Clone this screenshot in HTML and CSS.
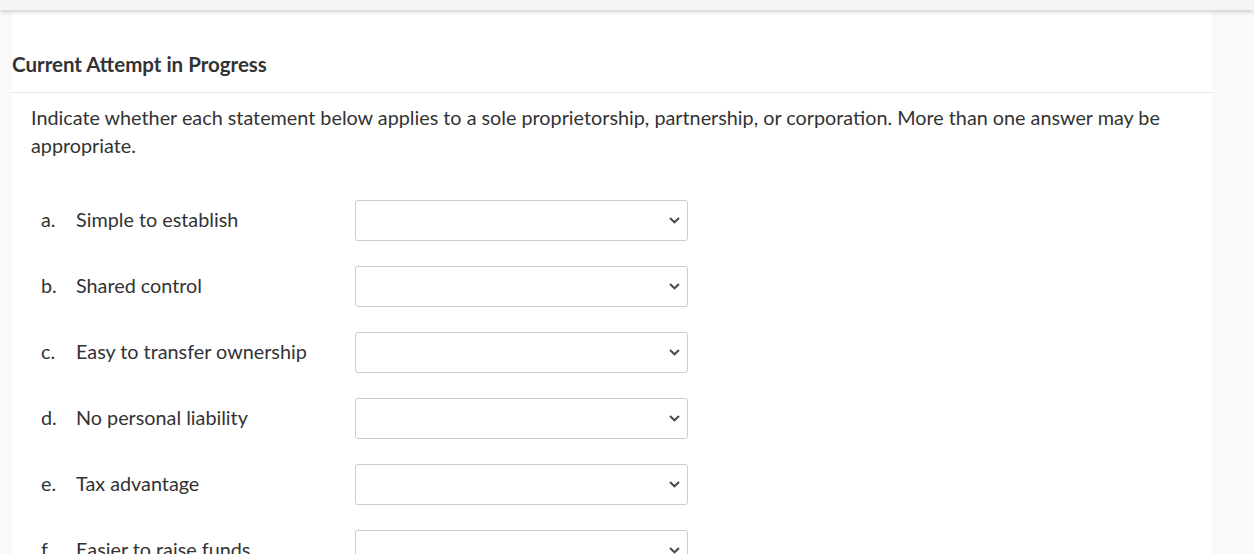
FILE: index.html
```html
<!DOCTYPE html>
<html>
<head>
<meta charset="utf-8">
<link rel="stylesheet" href="styles.css">
</head>
<body>
<div class="topbar"></div>
<div class="page">
  <main class="card">
    <h2 class="title">Current Attempt in Progress</h2>
    <div class="body">
      <p class="intro">Indicate whether each statement below applies to a sole proprietorship, partnership, or corporation. More than one answer may be appropriate.</p>
      <div class="items">
        <div class="item"><span class="letter">a.</span><span class="text">Simple to establish</span><div class="select"><svg viewBox="0 0 11 7" class="chev"><path d="M1 1l4.5 4.3 4.5-4.3" fill="none" stroke="#4a4a4a" stroke-width="2"/></svg></div></div>
        <div class="item"><span class="letter">b.</span><span class="text">Shared control</span><div class="select"><svg viewBox="0 0 11 7" class="chev"><path d="M1 1l4.5 4.3 4.5-4.3" fill="none" stroke="#4a4a4a" stroke-width="2"/></svg></div></div>
        <div class="item"><span class="letter">c.</span><span class="text">Easy to transfer ownership</span><div class="select"><svg viewBox="0 0 11 7" class="chev"><path d="M1 1l4.5 4.3 4.5-4.3" fill="none" stroke="#4a4a4a" stroke-width="2"/></svg></div></div>
        <div class="item"><span class="letter">d.</span><span class="text">No personal liability</span><div class="select"><svg viewBox="0 0 11 7" class="chev"><path d="M1 1l4.5 4.3 4.5-4.3" fill="none" stroke="#4a4a4a" stroke-width="2"/></svg></div></div>
        <div class="item"><span class="letter">e.</span><span class="text">Tax advantage</span><div class="select"><svg viewBox="0 0 11 7" class="chev"><path d="M1 1l4.5 4.3 4.5-4.3" fill="none" stroke="#4a4a4a" stroke-width="2"/></svg></div></div>
        <div class="item"><span class="letter">f.</span><span class="text">Easier to raise funds</span><div class="select"><svg viewBox="0 0 11 7" class="chev"><path d="M1 1l4.5 4.3 4.5-4.3" fill="none" stroke="#4a4a4a" stroke-width="2"/></svg></div></div>
      </div>
    </div>
  </main>
</div>
</body>
</html>
```
FILE: styles.css
```css
html, body { margin: 0; padding: 0; }
body {
  background: #f9f9f9;
  font-family: Lato, "Liberation Sans", sans-serif;
  color: #333;
  height: 554px;
  overflow: hidden;
}
.topbar {
  height: 10px;
  background: #f5f5f5;
  box-shadow: 0 2px 4px rgba(0,0,0,0.18);
  position: relative;
  z-index: 2;
}
.page {
  padding-left: 12px;
  width: 1200px;
}
.card {
  background: #fff;
  height: 544px;
}
.title {
  margin: 0;
  padding: 42px 0 16px 0;
  font-size: 20.5px;
  font-weight: 700;
  line-height: 24px;
  border-bottom: 1px solid #e8e8e8;
}
.body {
  padding: 10px 19px 0 19px;
}
.intro {
  margin: 0;
  font-size: 19.8px;
  line-height: 28px;
}
.items {
  margin-top: 41px;
  display: flex;
  flex-direction: column;
  gap: 25px;
}
.item {
  display: flex;
  align-items: center;
  height: 41px;
  font-size: 19.8px;
}
.letter, .text {
  padding-bottom: 3px;
}
.letter {
  padding-left: 10px;
  box-sizing: border-box;
  width: 45px;
}
.text {
  width: 279px;
}
.select {
  width: 333px;
  height: 41px;
  box-sizing: border-box;
  border: 1px solid #ccc;
  border-radius: 3px;
  display: flex;
  align-items: center;
  justify-content: flex-end;
  padding-right: 7px;
}
.chev { width: 11px; height: 7px; }
```
